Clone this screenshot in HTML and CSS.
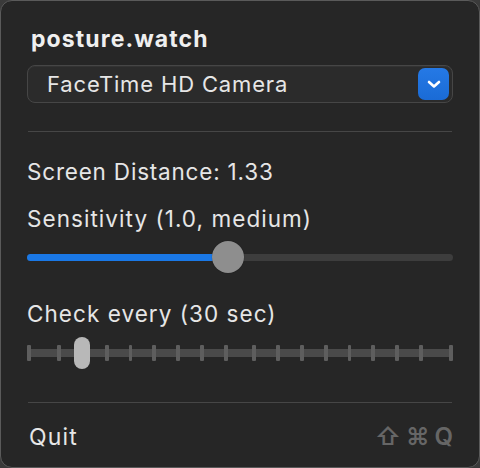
FILE: index.html
```html
<!DOCTYPE html>
<html>
<head>
<meta charset="utf-8">
<link rel="stylesheet" href="styles.css">
</head>
<body>
<div class="window">
  <div class="title">posture.watch</div>
  <div class="popup">
    <span class="popup-text">FaceTime HD Camera</span>
    <span class="popup-btn">
      <svg width="14" height="9" viewBox="0 0 14 9"><path d="M2 2 L7 6.5 L12 2" fill="none" stroke="#ffffff" stroke-width="2.6" stroke-linecap="round" stroke-linejoin="round"/></svg>
    </span>
  </div>
  <div class="sep sep-top"></div>
  <div class="label label-distance">Screen Distance: 1.33</div>
  <div class="label label-sens">Sensitivity (1.0, medium)</div>
  <div class="slider">
    <div class="track">
      <div class="fill"></div>
      <div class="knob"></div>
    </div>
  </div>
  <div class="label label-check">Check every (30 sec)</div>
  <div class="tslider">
    <div class="ttrack"></div>
    <div class="ticks">
      <span class="tick"></span><span class="tick"></span><span class="tick"></span><span class="tick"></span><span class="tick"></span><span class="tick"></span><span class="tick"></span><span class="tick"></span><span class="tick"></span><span class="tick"></span><span class="tick"></span><span class="tick"></span><span class="tick"></span><span class="tick"></span><span class="tick"></span><span class="tick"></span><span class="tick"></span><span class="tick"></span>
    </div>
    <div class="tknob"></div>
  </div>
  <div class="sep sep-bottom"></div>
  <div class="quit">
    <span class="quit-text">Quit</span>
    <span class="shortcut">⇧⌘Q</span>
  </div>
</div>
</body>
</html>
```
FILE: styles.css
```css
html, body {
  margin: 0;
  padding: 0;
  background: #3a3a3a;
}
.window {
  box-sizing: border-box;
  width: 480px;
  height: 468px;
  border: 1px solid #5a5a5a;
  border-radius: 12px;
  background: #262626;
  padding: 0 26px 0 26px;
  display: flex;
  flex-direction: column;
  font-family: Inter, "Noto Sans", sans-serif;
  color: #e8e8e8;
  overflow: hidden;
}
.title {
  margin-top: 21px;
  height: 34px;
  line-height: 34px;
  font-size: 23px;
  font-weight: 700;
  letter-spacing: 1.1px;
  padding-left: 4px;
  color: #efefef;
}
.popup {
  margin-top: 9px;
  height: 38px;
  box-sizing: border-box;
  border: 1px solid #464646;
  border-radius: 8px;
  background: #2b2b2b;
  display: flex;
  align-items: center;
  justify-content: space-between;
  padding: 0 3px 0 19px;
  box-shadow: inset 0 1px 0 #333;
}
.popup-text {
  font-size: 22px;
  letter-spacing: 0.85px;
  color: #e6e6e6;
}
.popup-btn {
  width: 31px;
  height: 32px;
  border-radius: 7px;
  background: linear-gradient(#2579e6, #1a6bd6);
  display: flex;
  align-items: center;
  justify-content: center;
}
.sep {
  height: 1px;
  background: #464646;
  margin-left: 1px;
  margin-right: 1px;
}
.sep-top { margin-top: 28px; }
.label {
  height: 28px;
  line-height: 28px;
  font-size: 22.5px;
  letter-spacing: 0.8px;
  color: #e6e6e6;
}
.label-sens, .label-check { letter-spacing: 1.05px; }
.label-distance { margin-top: 26px; }
.label-sens { margin-top: 19px; }
.slider {
  margin-top: 8px;
  height: 32px;
  display: flex;
  align-items: center;
}
.track {
  position: relative;
  flex: 1;
  height: 7px;
  border-radius: 4px;
  background: #3d3d3d;
}
.fill {
  width: 200px;
  height: 7px;
  border-radius: 4px;
  background: #1a78e6;
}
.knob {
  position: absolute;
  left: 185px;
  top: -13px;
  width: 32px;
  height: 32px;
  border-radius: 50%;
  background: #8e8e8e;
  box-shadow: 0 0 1px rgba(0,0,0,0.5);
}
.label-check { margin-top: 27px; }
.tslider {
  position: relative;
  margin-top: 9px;
  height: 32px;
}
.ttrack {
  position: absolute;
  left: 1px;
  right: 0;
  top: 12px;
  height: 8px;
  background: #4a4a4a;
}
.ticks {
  position: absolute;
  left: 0;
  right: 0;
  top: 8px;
  height: 16px;
  display: flex;
  padding-left: 0;
}
.tick {
  width: 4px;
  height: 16px;
  background: #5e5e5e;
  margin-right: 20px;
  border-radius: 1px;
}
.tick:first-child { margin-right: 26px; }
.tick:nth-child(9) { margin-right: 24px; }
.tick:nth-child(17) { margin-right: 26px; }
.tick:last-child { margin-right: 0; }
.tknob {
  position: absolute;
  left: 47px;
  top: 0;
  width: 16px;
  height: 32px;
  border-radius: 8px;
  background: #b8b8b8;
}
.sep-bottom { margin-top: 33px; }
.quit {
  margin-top: 20px;
  height: 28px;
  line-height: 28px;
  display: flex;
  justify-content: space-between;
  padding-left: 2px;
}
.quit-text {
  font-size: 23px;
  letter-spacing: 1.2px;
  color: #e6e6e6;
}
.shortcut {
  font-size: 24px;
  font-weight: 600;
  color: #666666;
  letter-spacing: 5px;
  margin-right: -5px;
}
```
